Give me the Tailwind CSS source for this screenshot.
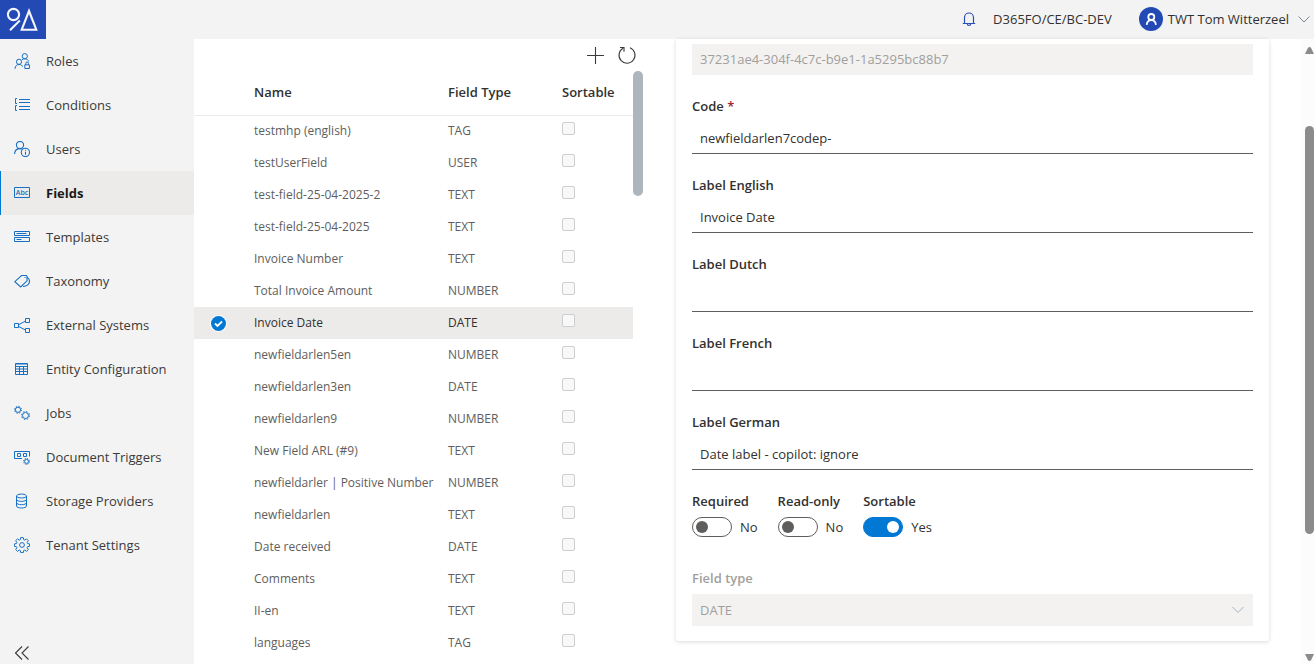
<!DOCTYPE html>
<html lang="en">
<head>
  <meta charset="utf-8">
  <meta name="viewport" content="width=device-width, initial-scale=1">
  <title>Fields</title>
  <script src="https://cdn.jsdelivr.net/npm/@tailwindcss/browser@4"></script>
</head>
<body class="flex h-screen flex-col overflow-hidden bg-white font-['Open_Sans',sans-serif] text-[13px] leading-5 text-[#323130]">

  <header class="flex h-[39px] shrink-0 items-center bg-[#f3f3f3]">
    <a href="#" aria-label="Home" class="block bg-[#2349b5]">
      <svg class="h-[39px] w-[46px]" viewBox="0 0 46 39" fill="none" stroke="#f4f6fc" stroke-width="2.1"><circle cx="13.5" cy="14.5" r="5.6"/><path d="M19.8 20.6 10 30.2"/><path d="M29 11 21.7 29.7h14.6z"/></svg>
    </a>
    <div class="ml-auto flex items-center pr-1 pb-0.5">
      <button type="button" aria-label="Notifications" class="mr-4">
        <svg class="h-4 w-4" viewBox="0 0 16 16" fill="none" stroke="#2f4fb8" stroke-width="1.2"><path d="M3.5 12.5V6.5a4.5 4.5 0 0 1 9 0v6M1.8 12.5h12.4M6.3 12.8a1.7 1.7 0 0 0 3.4 0"/></svg>
      </button>
      <span>D365FO/CE/BC-DEV</span>
      <button type="button" class="ml-[27px] flex items-center gap-[5px]">
        <svg class="h-6 w-6" viewBox="0 0 24 24" fill="none" stroke="#fff" stroke-width="1.8"><circle cx="12" cy="12" r="12" fill="#2349b5" stroke="none"/><circle cx="12.3" cy="10" r="3"/><path d="M7.7 17.8c.3-3 2-4.7 4.6-4.7s4.3 1.7 4.6 4.7"/></svg>
        <span class="mr-1">TWT Tom Witterzeel</span>
        <svg class="h-3 w-3" viewBox="0 0 12 12" fill="none" stroke="#7b8794"><path d="m.5 3.5 5.5 5.5 5.5-5.5"/></svg>
      </button>
    </div>
  </header>

  <div class="flex min-h-0 flex-1">
    <nav class="flex w-[194px] shrink-0 flex-col bg-[#f3f3f3] [&_li>a]:flex [&_li>a]:h-11 [&_li>a]:items-center [&_li>a]:gap-4 [&_li>a]:border-l [&_li>a]:border-transparent [&_li>a]:pl-[13px] [&_svg]:size-4 [&_svg]:shrink-0">
      <ul class="text-[#3b3a39]">
        <li><a href="#">
          <svg viewBox="0 0 16 16" fill="none" stroke="#1870c2"><circle cx="10.8" cy="3.2" r="2.6"/><circle cx="5" cy="8.8" r="2.6"/><path d="M1 15.8c.2-2.8 1.6-4.3 4-4.3s3 .8 3.6 2.2M7.8 6.8c.7-.7 1.7-1 3-1 2 0 3.3 1 3.9 2.7"/><path d="M10.8 11.8h4.6v3.7h-4.6zM11.8 11.8v-1.5a1.3 1.3 0 0 1 2.6 0v1.5"/></svg>
          Roles</a></li>
        <li><a href="#">
          <svg viewBox="0 0 16 16" fill="none" stroke="#1870c2"><path d="M5 2.5h11M5 5.5h11M5 9.5h11M5 12.5h11M3 1.5H1.5v5H3M3 8.5H1.5v5H3"/></svg>
          Conditions</a></li>
        <li><a href="#">
          <svg viewBox="0 0 16 16" fill="none" stroke="#1870c2" stroke-width="1.1"><circle cx="6" cy="4" r="3.6"/><path d="M.5 13c.3-3.5 2.3-5.4 5.5-5.4 1 0 1.7.2 2.3.5"/><circle cx="11.4" cy="11.4" r="4.1"/><path d="M11.5 10.8v3M11.5 8.8v1"/></svg>
          Users</a></li>
        <li><a href="#" aria-current="page" class="rounded-r-xs border-[#0078d4]! bg-[#edebe9] font-bold text-[#1b1a19]">
          <svg viewBox="0 0 16 16" fill="none" stroke="#1870c2"><path d="M.5 2.5h15v10H.5z"/><text x="8" y="10" text-anchor="middle" font-size="7" font-weight="600" fill="#1870c2" stroke="none">Abc</text></svg>
          Fields</a></li>
        <li><a href="#">
          <svg viewBox="0 0 16 16" fill="none" stroke="#1870c2"><path d="M.5 2.5h15v4H.5zM.5 8.5h15v4H.5zM2.5 4.5h10M2.5 10.5h5"/></svg>
          Templates</a></li>
        <li><a href="#">
          <svg viewBox="0 0 16 16" fill="none" stroke="#1870c2" stroke-width="1.1"><path d="M7.5 2.5h4.8l.7.7v4.6L6.7 14 .8 8.7z"/><path d="M13 4.3c1.7 1 2.5 2.3 2.5 4 0 2.8-2.5 5.2-6.5 5.2"/><path d="M10.5 4.5h1"/></svg>
          Taxonomy</a></li>
        <li><a href="#">
          <svg viewBox="0 0 16 16" fill="none" stroke="#1870c2"><path d="M.5 6.5h4v4h-4zM11.5 1.5h4v4h-4zM11.5 11.5h4v4h-4zM4.5 7.8l7-3.7M4.5 9.4l7 3.6"/></svg>
          External Systems</a></li>
        <li><a href="#">
          <svg viewBox="0 0 16 16" fill="none" stroke="#1870c2"><path d="M1.5 2.5h12v11h-12zM1.5 3h12M1.5 5.5h12M1.5 8h12M1.5 10.5h12M5.5 5v8.5M9.5 5v8.5"/></svg>
          Entity Configuration</a></li>
        <li><a href="#">
          <svg viewBox="0 0 16 16" fill="none" stroke="#1870c2"><circle cx="4" cy="4.8" r="2.6"/><circle cx="4" cy="4.8" r="3.5" stroke-dasharray="1.375 1.375"/><circle cx="11.5" cy="10.5" r="3"/><circle cx="11.5" cy="10.5" r="4" stroke-dasharray="1.57 1.57"/></svg>
          Jobs</a></li>
        <li><a href="#">
          <svg viewBox="0 0 16 16" fill="none" stroke="#1870c2"><path d="M8 9.5H.5v-7h15v5"/><path d="M3.5 4.5h3v3h-3zM9.5 4.5h3v3h-3z"/><circle cx="12.5" cy="12.4" r="2"/><circle cx="12.5" cy="12.4" r="3" stroke-dasharray="1.18 1.18"/></svg>
          Document Triggers</a></li>
        <li><a href="#">
          <svg viewBox="0 0 16 16" fill="none" stroke="#1870c2"><ellipse cx="7.5" cy="3" rx="5" ry="2"/><path d="M2.5 3v10c0 1.1 2.2 2 5 2s5-.9 5-2V3M2.5 6.4c0 1.1 2.2 2 5 2s5-.9 5-2M2.5 9.7c0 1.1 2.2 2 5 2s5-.9 5-2"/></svg>
          Storage Providers</a></li>
        <li><a href="#">
          <svg viewBox="0 0 16 16" fill="none" stroke="#1870c2"><circle cx="8" cy="8" r="2.4"/><path d="M6.7.6h2.6l.4 2.1 1 .4 1.8-1.2 1.8 1.8-1.2 1.8.4 1 2.1.4v2.4l-2.1.4-.4 1 1.2 1.8-1.8 1.8-1.8-1.2-1 .4-.4 2.1H6.7l-.4-2.1-1-.4-1.8 1.2-1.8-1.8 1.2-1.8-.4-1L.4 9.3V6.9l2.1-.4.4-1-1.2-1.8 1.8-1.8 1.8 1.2 1-.4z"/></svg>
          Tenant Settings</a></li>
      </ul>
      <button type="button" aria-label="Collapse navigation" class="mt-auto mb-[3px] ml-[14px] w-4">
        <svg viewBox="0 0 16 16" fill="none" stroke="#3b3a39" stroke-width="1.1"><path d="M8 1.5 1.5 8 8 14.5M14.5 1.5 8 8l6.5 6.5"/></svg>
      </button>
    </nav>

    <main class="flex min-w-0 flex-1">
      <section class="flex w-[calc(40%+1px)] shrink-0 flex-col" aria-label="Field list">
        <div class="flex h-8 shrink-0 items-center justify-end gap-3 pr-1.5">
          <button type="button" aria-label="Add field">
            <svg class="size-5" viewBox="0 0 20 20" fill="none" stroke="#3b3a39" stroke-width="1.1"><path d="M10.5 2v17M2 10.5h17"/></svg>
          </button>
          <button type="button" aria-label="Refresh">
            <svg class="size-5" viewBox="0 0 20 20" fill="none" stroke="#3b3a39" stroke-width="1.1"><path d="M13 2.8A8 8 0 1 1 6 3.3M3 2.5h4v4.2"/></svg>
          </button>
        </div>
        <div class="flex min-h-0 flex-1 items-start overflow-hidden">
          <table class="min-w-0 flex-1 table-fixed border-collapse text-left text-xs text-[#605e5c] [&_input]:mb-[5px] [&_input]:block [&_input]:size-[13px] [&_input]:appearance-none [&_input]:rounded-xs [&_input]:border [&_input]:border-[#cecece] [&_input]:bg-[#f8f8f8] [&_td]:p-0 [&_td]:whitespace-nowrap [&_th]:p-0 [&_th]:font-semibold [&_tr]:h-8">
            <thead class="text-[13px] text-[#323130]">
              <tr class="h-11! border-b border-[#edebe9]">
                <th class="w-[60px]"></th>
                <th>Name</th>
                <th class="w-[114px]">Field Type</th>
                <th class="w-[71px]">Sortable</th>
              </tr>
            </thead>
            <tbody>
              <tr><td></td><td>testmhp (english)</td><td>TAG</td><td><input type="checkbox" disabled aria-label="Sortable"></td></tr>
              <tr><td></td><td>testUserField</td><td>USER</td><td><input type="checkbox" disabled aria-label="Sortable"></td></tr>
              <tr><td></td><td>test-field-25-04-2025-2</td><td>TEXT</td><td><input type="checkbox" disabled aria-label="Sortable"></td></tr>
              <tr><td></td><td>test-field-25-04-2025</td><td>TEXT</td><td><input type="checkbox" disabled aria-label="Sortable"></td></tr>
              <tr><td></td><td>Invoice Number</td><td>TEXT</td><td><input type="checkbox" disabled aria-label="Sortable"></td></tr>
              <tr><td></td><td>Total Invoice Amount</td><td>NUMBER</td><td><input type="checkbox" disabled aria-label="Sortable"></td></tr>
              <tr class="bg-[#edebe9] text-[#323130]" aria-selected="true">
                <td class="pl-4!"><svg class="size-[17px]" viewBox="0 0 17 17" role="img" aria-label="Selected"><circle cx="8.5" cy="8.5" r="8.5" fill="#fff"/><circle cx="8.5" cy="8.5" r="7.5" fill="#0078d4"/><path d="m5 8.5 2.5 2.5L12 6.5" fill="none" stroke="#fff" stroke-width="1.8"/></svg></td>
                <td>Invoice Date</td><td>DATE</td><td><input type="checkbox" disabled aria-label="Sortable"></td>
              </tr>
              <tr><td></td><td>newfieldarlen5en</td><td>NUMBER</td><td><input type="checkbox" disabled aria-label="Sortable"></td></tr>
              <tr><td></td><td>newfieldarlen3en</td><td>DATE</td><td><input type="checkbox" disabled aria-label="Sortable"></td></tr>
              <tr><td></td><td>newfieldarlen9</td><td>NUMBER</td><td><input type="checkbox" disabled aria-label="Sortable"></td></tr>
              <tr><td></td><td>New Field ARL (#9)</td><td>TEXT</td><td><input type="checkbox" disabled aria-label="Sortable"></td></tr>
              <tr><td></td><td>newfieldarler | Positive Number</td><td>NUMBER</td><td><input type="checkbox" disabled aria-label="Sortable"></td></tr>
              <tr><td></td><td>newfieldarlen</td><td>TEXT</td><td><input type="checkbox" disabled aria-label="Sortable"></td></tr>
              <tr><td></td><td>Date received</td><td>DATE</td><td><input type="checkbox" disabled aria-label="Sortable"></td></tr>
              <tr><td></td><td>Comments</td><td>TEXT</td><td><input type="checkbox" disabled aria-label="Sortable"></td></tr>
              <tr><td></td><td>II-en</td><td>TEXT</td><td><input type="checkbox" disabled aria-label="Sortable"></td></tr>
              <tr><td></td><td>languages</td><td>TAG</td><td><input type="checkbox" disabled aria-label="Sortable"></td></tr>
            </tbody>
          </table>
          <div class="h-[125px] w-[10px] shrink-0 rounded-full bg-[#adb5bd]"></div>
        </div>
      </section>

      <form class="mx-[33px] flex min-w-0 flex-1 flex-col gap-[17px] self-start rounded-b-xs px-4 pt-[5px] pb-[15px] shadow-[0_1px_4px_rgba(0,0,0,0.15)] [&_label]:font-semibold">
        <input type="text" aria-label="Id" value="37231ae4-304f-4c7c-b9e1-1a5295bc88b7" disabled class="h-[31px] w-full bg-[#f3f2f1] px-2 pb-0.5 text-[#a19f9d]">
        <div>
          <label for="code" class="block pt-1 pb-1.5">Code <span class="text-[#a4262c]">*</span></label>
          <input id="code" type="text" value="newfieldarlen7codep-" required class="h-8 w-full border-b border-[#605e5c] px-2">
        </div>
        <div>
          <label for="label-en" class="block pt-1 pb-1.5">Label English</label>
          <input id="label-en" type="text" value="Invoice Date" class="h-8 w-full border-b border-[#605e5c] px-2">
        </div>
        <div>
          <label for="label-nl" class="block pt-1 pb-1.5">Label Dutch</label>
          <input id="label-nl" type="text" class="h-8 w-full border-b border-[#605e5c] px-2">
        </div>
        <div>
          <label for="label-fr" class="block pt-1 pb-1.5">Label French</label>
          <input id="label-fr" type="text" class="h-8 w-full border-b border-[#605e5c] px-2">
        </div>
        <div>
          <label for="label-de" class="block pt-1 pb-1.5">Label German</label>
          <input id="label-de" type="text" value="Date label - copilot: ignore" class="h-8 w-full border-b border-[#605e5c] px-2">
        </div>

        <div class="flex gap-5 pt-1 pb-2.5 [&_input]:flex [&_input]:h-5 [&_input]:w-10 [&_input]:appearance-none [&_input]:items-center [&_input]:rounded-full [&_input]:border [&_input]:border-[#605e5c] [&_input]:px-[3px] [&_input]:before:size-3 [&_input]:before:rounded-full [&_input]:before:bg-[#605e5c] [&_input]:checked:justify-end [&_input]:checked:border-[#0078d4] [&_input]:checked:bg-[#0078d4] [&_input]:checked:before:bg-white">
          <div>
            <label for="required" class="block">Required</label>
            <div class="mt-[6px] flex items-center gap-2"><input id="required" type="checkbox" role="switch"><span>No</span></div>
          </div>
          <div>
            <label for="read-only" class="block">Read-only</label>
            <div class="mt-[6px] flex items-center gap-2"><input id="read-only" type="checkbox" role="switch"><span>No</span></div>
          </div>
          <div>
            <label for="sortable" class="block">Sortable</label>
            <div class="mt-[6px] flex items-center gap-2"><input id="sortable" type="checkbox" role="switch" checked><span>Yes</span></div>
          </div>
        </div>

        <div class="text-[#a19f9d]">
          <label for="field-type" class="block pt-1 pb-1.5">Field type</label>
          <div class="relative">
            <select id="field-type" disabled class="h-8 w-full appearance-none bg-[#f3f2f1] px-2 opacity-100">
              <option>DATE</option>
            </select>
            <svg class="pointer-events-none absolute top-[10px] right-[9px] size-3" viewBox="0 0 12 12" fill="none" stroke="#a3b1c2"><path d="m.5 3 5.5 5.5L11.5 3"/></svg>
          </div>
        </div>
      </form>

      <div class="flex w-3 shrink-0 flex-col items-end bg-[#fcfcfc] pt-2" aria-hidden="true">
        <svg class="h-[7px] w-[9px]" viewBox="0 0 9 7" fill="#8b8b8b"><path d="M0 7h9L6 .8Q4.5-.8 3 .8z"/></svg>
        <div class="mt-[72px] h-[408px] w-[9px] rounded-full bg-[#8b8b8b]"></div>
        <svg class="mt-auto mb-[3px] h-[7px] w-[9px]" viewBox="0 0 9 7" fill="#8b8b8b"><path d="M0 0h9L6 6.2q-1.5 1.6-3 0z"/></svg>
      </div>
    </main>
  </div>
</body>
</html>
